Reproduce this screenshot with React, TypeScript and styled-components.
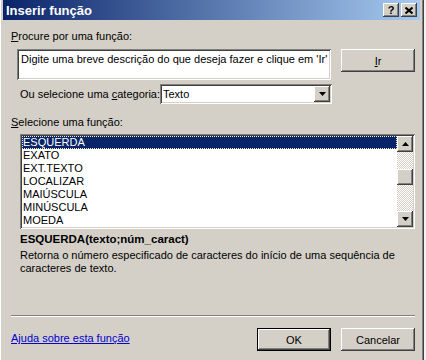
import styled, { createGlobalStyle } from 'styled-components'

const FACE = '#d4d0c8'
const SHADOW = '#808080'
const DARK = '#404040'

const functions = ['ESQUERDA', 'EXATO', 'EXT.TEXTO', 'LOCALIZAR', 'MAIÚSCULA', 'MINÚSCULA', 'MOEDA']

const GlobalStyle = createGlobalStyle`
  html, body {
    margin: 0;
    padding: 0;
    background: #f2f2f2;
  }
  body {
    font-family: "Liberation Sans", Arial, sans-serif;
    font-size: 11px;
    color: #000;
  }
`

// classic 3D edges
const raised = `
  background: ${FACE};
  box-shadow: inset -1px -1px ${DARK}, inset 1px 1px #fff, inset -2px -2px ${SHADOW}, inset 2px 2px ${FACE};
`

const sunken = `
  background: #fff;
  box-shadow: inset 1px 1px ${SHADOW}, inset -1px -1px #fff, inset 2px 2px ${DARK}, inset -2px -2px ${FACE};
`

const Dialog = styled.div`
  width: 424px;
  height: 360px;
  box-sizing: border-box;
  padding: 0 3px;
  background: ${FACE};
  border-right: 1px solid ${DARK};
  box-shadow: inset -1px 0 ${SHADOW}, inset 1px 0 #fff;
  display: flex;
  flex-direction: column;
  overflow: hidden;
`

const TitleBar = styled.div`
  height: 20px;
  display: flex;
  align-items: center;
  padding: 0 3px;
  background: linear-gradient(to right, #0a246a, #a6caf0);
`

const Title = styled.div`
  flex: 1;
  color: #fff;
  font-weight: bold;
  font-size: 13px;
`

const TitleButtons = styled.div`
  display: flex;
  gap: 2px;
`

const TitleButton = styled.div`
  ${raised}
  width: 16px;
  height: 14px;
  display: flex;
  align-items: center;
  justify-content: center;
  font-weight: bold;
  font-size: 11px;
  line-height: 14px;
`

const Body = styled.div`
  flex: 1;
  display: flex;
  flex-direction: column;
  padding: 0 5px 0 8px;
`

const Label = styled.div<{ $top: number }>`
  margin-top: ${({ $top }) => $top}px;
  line-height: 13px;
  white-space: nowrap;
`

const Row = styled.div<{ $top: number; $indent: number }>`
  display: flex;
  align-items: flex-start;
  margin-top: ${({ $top }) => $top}px;
  margin-left: ${({ $indent }) => $indent}px;
`

const SearchBox = styled.div`
  ${sunken}
  width: 314px;
  height: 31px;
  box-sizing: border-box;
  padding: 4px;
  line-height: 13px;
  white-space: nowrap;
  overflow: hidden;
`

const Button = styled.div<{ $default?: boolean }>`
  ${raised}
  width: 74px;
  height: 23px;
  box-sizing: border-box;
  display: flex;
  align-items: center;
  justify-content: center;
  ${({ $default }) => $default && `
    border: 1px solid #000;
  `}
`

const GoButton = styled(Button)`
  margin-left: 10px;
`

const CategoryLabel = styled.div`
  width: 140px;
  line-height: 20px;
  white-space: nowrap;
`

const Select = styled.div`
  ${sunken}
  width: 172px;
  height: 20px;
  box-sizing: border-box;
  display: flex;
  align-items: center;
  padding: 2px;
`

const SelectValue = styled.div`
  flex: 1;
  padding-left: 1px;
  line-height: 16px;
`

const ArrowButton = styled.div`
  ${raised}
  width: 16px;
  height: 16px;
  display: flex;
  align-items: center;
  justify-content: center;
  flex-shrink: 0;
`

const ListBox = styled.div`
  ${sunken}
  margin-top: 5px;
  margin-left: 9px;
  width: 395px;
  height: 95px;
  box-sizing: border-box;
  padding: 2px;
  display: flex;
`

const Items = styled.div`
  flex: 1;
  display: flex;
  flex-direction: column;
`

const Item = styled.div<{ $selected?: boolean }>`
  height: 13px;
  line-height: 13px;
  padding-left: 1px;
  background: ${({ $selected }) => ($selected ? '#0a246a' : 'transparent')};
  color: ${({ $selected }) => ($selected ? '#fff' : '#000')};
  outline: ${({ $selected }) => ($selected ? '1px dotted #f0f0c0' : 'none')};
  outline-offset: -1px;
`

const ScrollBar = styled.div`
  width: 16px;
  display: flex;
  flex-direction: column;
  background: repeating-conic-gradient(#fff 0 25%, ${FACE} 0 50%) 0 0 / 2px 2px;
`

const Thumb = styled.div`
  ${raised}
  width: 16px;
  height: 16px;
  margin-top: 17px;
`

const Spacer = styled.div`
  flex: 1;
`

const Signature = styled.div`
  margin-top: 4px;
  margin-left: 9px;
  font-weight: bold;
  font-size: 11.5px;
  line-height: 13px;
`

const Description = styled.div`
  margin-top: 3px;
  margin-left: 9px;
  line-height: 13px;
`

const Separator = styled.div`
  margin-top: 40px;
  height: 0;
  border-top: 1px solid ${SHADOW};
  border-bottom: 1px solid #fff;
`

const Footer = styled.div`
  margin-top: 11px;
  display: flex;
  align-items: flex-start;
  gap: 10px;
`

const HelpLink = styled.a`
  flex: 1;
  padding-top: 4px;
  line-height: 13px;
  color: #0000cc;
  text-decoration: underline;
`

const Key = styled.span`
  text-decoration: underline;
`

const Triangle = ({ up }: { up?: boolean }) => (
  <svg width="7" height="4" viewBox="0 0 7 4">
    <path d={up ? 'M3.5 0 L7 4 L0 4 Z' : 'M0 0 L7 0 L3.5 4 Z'} fill="#000" />
  </svg>
)

const App = () => {
  return (
    <>
      <GlobalStyle />
      <Dialog>
        <TitleBar>
          <Title>Inserir função</Title>
          <TitleButtons>
            <TitleButton>?</TitleButton>
            <TitleButton>
              <svg width="8" height="7" viewBox="0 0 8 7">
                <path d="M0.5 0.5 L7.5 6.5 M7.5 0.5 L0.5 6.5" stroke="#000" strokeWidth="2" />
              </svg>
            </TitleButton>
          </TitleButtons>
        </TitleBar>

        <Body>
          <Label $top={10}><Key>P</Key>rocure por uma função:</Label>

          <Row $top={6} $indent={6}>
            <SearchBox>Digite uma breve descrição do que deseja fazer e clique em 'Ir'</SearchBox>
            <GoButton><Key>I</Key>r</GoButton>
          </Row>

          <Row $top={4} $indent={9}>
            <CategoryLabel>Ou selecione uma <Key>c</Key>ategoria:</CategoryLabel>
            <Select>
              <SelectValue>Texto</SelectValue>
              <ArrowButton><Triangle /></ArrowButton>
            </Select>
          </Row>

          <Label $top={12}><Key>S</Key>elecione uma função:</Label>

          <ListBox>
            <Items>
              {functions.map((name, i) => (
                <Item key={name} $selected={i === 0}>{name}</Item>
              ))}
            </Items>
            <ScrollBar>
              <ArrowButton><Triangle up /></ArrowButton>
              <Thumb />
              <Spacer />
              <ArrowButton><Triangle /></ArrowButton>
            </ScrollBar>
          </ListBox>

          <Signature>ESQUERDA(texto;núm_caract)</Signature>
          <Description>
            Retorna o número especificado de caracteres do início de uma sequência de
            <br />
            caracteres de texto.
          </Description>

          <Separator />

          <Footer>
            <HelpLink>Ajuda sobre esta função</HelpLink>
            <Button $default>OK</Button>
            <Button>Cancelar</Button>
          </Footer>
        </Body>
      </Dialog>
    </>
  )
}

export default App
